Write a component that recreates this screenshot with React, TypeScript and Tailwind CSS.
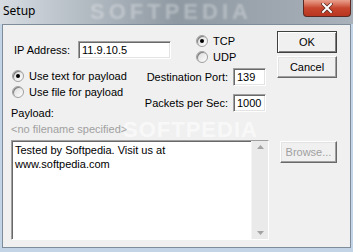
import React from "react";

const font = { fontFamily: '"Liberation Sans", Arial, sans-serif' };

function Radio({ checked, label }: { checked?: boolean; label: string }) {
  return (
    <div className="flex items-center h-[16px]">
      <span className="relative w-[12px] h-[12px] rounded-full border border-[#a0a0a0] bg-gradient-to-br from-[#d8d8d8] to-white shadow-[inset_1px_1px_0_#808080] flex items-center justify-center">
        {checked && <span className="w-[4px] h-[4px] rounded-full bg-black" />}
      </span>
      <span className="ml-[5px] text-[11px] leading-[14px] text-black">{label}</span>
    </div>
  );
}

function Field({ value, w }: { value: string; w: string }) {
  return (
    <div
      className={`${w} h-[18px] bg-white border border-t-[#a0a0a0] border-l-[#a0a0a0] border-b-white border-r-white shadow-[inset_1px_1px_0_#696969,inset_-1px_-1px_0_#e3e3e3] flex items-center pl-[3px] text-[11px] text-black`}
    >
      {value}
    </div>
  );
}

function Button({ label, isDefault, disabled, w }: { label: string; isDefault?: boolean; disabled?: boolean; w: string }) {
  return (
    <div
      className={`${w} h-[22px] flex items-center justify-center text-[11px] bg-[#f0f0f0] border ${
        isDefault
          ? "border-[#404040] shadow-[inset_1px_1px_0_#fff,inset_-1px_-1px_0_#808080]"
          : "border-t-white border-l-white border-r-[#696969] border-b-[#696969] shadow-[inset_-1px_-1px_0_#a0a0a0,inset_1px_1px_0_#e3e3e3]"
      } ${disabled ? "text-[#a0a0a0]" : "text-black"}`}
    >
      {label}
    </div>
  );
}

export default function App() {
  return (
    <div className="w-[353px] h-[252px] bg-[#c3d4e7] flex flex-col overflow-hidden" style={font}>
      {/* title bar */}
      <div className="relative h-[24px] shrink-0 bg-gradient-to-r from-[#d6dce2] via-[#8f99a2] to-[#a9b2ba] flex items-start justify-between overflow-hidden">
        <span className="ml-[3px] mt-[2px] text-[12px] text-black z-10" style={{ fontFamily: '"Noto Sans", sans-serif' }}>
          Setup
        </span>
        <span className="absolute left-[90px] top-[1px] text-[22px] leading-[22px] font-bold tracking-[4px] text-white/30 blur-[1px]">
          SOFTPEDIA
        </span>
        <div className="mr-[2px] w-[48px] h-[17px] rounded-b-[4px] border border-t-0 border-[#5a2a22] bg-gradient-to-b from-[#e8a08e] via-[#c8452e] to-[#b8351f] flex items-center justify-center z-10">
          <svg width="12" height="10" viewBox="0 0 12 10">
            <path d="M2 1 L10 9 M10 1 L2 9" stroke="#5b2a20" strokeWidth="3.5" strokeLinecap="square" />
            <path d="M2 1 L10 9 M10 1 L2 9" stroke="#fff" strokeWidth="2" strokeLinecap="square" />
          </svg>
        </div>
      </div>

      {/* client area */}
      <div className="relative mx-[2px] mb-[4px] flex-1 bg-[#f0f0f0] border border-[#7f8c99] flex pl-[8px]">
        <div className="w-[258px] flex flex-col pt-[8px]">
          {/* row A */}
          <div className="flex">
            <div className="flex items-center mt-[8px] ml-[3px] h-[18px]">
              <span className="text-[11px] text-black">IP Address:</span>
              <div className="ml-[8px]">
                <Field value="11.9.10.5" w="w-[93px]" />
              </div>
            </div>
            <div className="ml-[25px] flex flex-col">
              <Radio checked label="TCP" />
              <Radio label="UDP" />
            </div>
          </div>
          {/* row B */}
          <div className="flex justify-between mt-[2px]">
            <div className="flex flex-col pt-[1px]">
              <div className="ml-[1px]">
                <Radio checked label="Use text for payload" />
                <Radio label="Use file for payload" />
              </div>
              <span className="mt-[6px] text-[11px] leading-[14px] text-black">Payload:</span>
            </div>
            <div className="grid grid-cols-[auto_auto] gap-x-[5px] gap-y-[8px] items-center mr-[3px] pt-[1px] h-fit">
              <span className="text-[11px] text-black text-right">Destination Port:</span>
              <Field value="139" w="w-[33px]" />
              <span className="text-[11px] text-black text-right">Packets per Sec:</span>
              <Field value="1000" w="w-[33px]" />
            </div>
          </div>
          <span className="mt-[2px] text-[11px] leading-[14px] text-[#a0a0a0]">&lt;no filename specified&gt;</span>
          {/* payload text */}
          <div className="mt-[4px] h-[100px] bg-white border border-t-[#a0a0a0] border-l-[#a0a0a0] border-b-white border-r-white shadow-[inset_1px_1px_0_#696969] flex">
            <div className="flex-1 pl-[3px] pt-[2px] text-[11px] leading-[14px] text-black">
              Tested by Softpedia. Visit us at
              <br />
              www.softpedia.com
            </div>
            <div className="w-[17px] bg-[#eaeaea] flex flex-col items-center justify-between py-[4px] border-l border-[#f4f4f4]">
              <svg width="7" height="4" viewBox="0 0 7 4">
                <path d="M0 4 L3.5 0 L7 4 Z" fill="#a3a3a3" />
              </svg>
              <svg width="7" height="4" viewBox="0 0 7 4">
                <path d="M0 0 L3.5 4 L7 0 Z" fill="#a3a3a3" />
              </svg>
            </div>
          </div>
        </div>

        {/* buttons */}
        <div className="ml-[8px] flex flex-col pt-[6px]">
          <Button label="OK" isDefault w="w-[60px]" />
          <div className="mt-[3px]">
            <Button label="Cancel" w="w-[60px]" />
          </div>
          <div className="mt-[63px] ml-[3px]">
            <Button label="Browse..." disabled w="w-[57px]" />
          </div>
        </div>

        <span className="absolute left-[120px] top-[88px] text-[22px] font-bold tracking-[1px] text-white/60 pointer-events-none">
          SOFTPEDIA
        </span>
      </div>
    </div>
  );
}
